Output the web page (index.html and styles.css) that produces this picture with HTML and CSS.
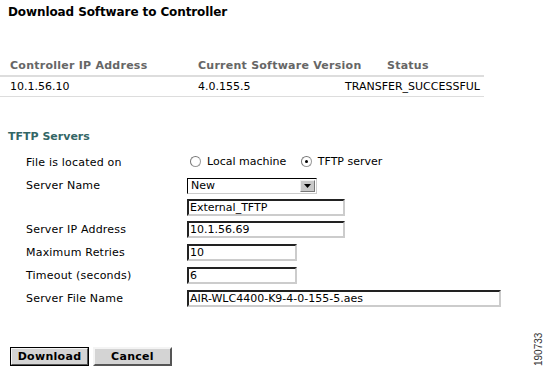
FILE: index.html
```html
<!DOCTYPE html>
<html lang="en">
<head>
  <meta charset="UTF-8">
  <title>Download Software to Controller</title>
  <link rel="stylesheet" href="styles.css">
</head>
<body>

<h2 class="title">Download Software to Controller</h2>

<table class="status">
  <colgroup>
    <col class="c1">
    <col class="c2">
    <col class="c3">
  </colgroup>
  <thead>
    <tr>
      <th>Controller IP Address</th>
      <th>Current Software Version</th>
      <th class="st">Status</th>
    </tr>
  </thead>
  <tbody>
    <tr>
      <td>10.1.56.10</td>
      <td>4.0.155.5</td>
      <td class="st">TRANSFER_SUCCESSFUL</td>
    </tr>
  </tbody>
</table>

<h3 class="section">TFTP Servers</h3>

<table class="form">
  <tr>
    <td class="lbl">File is located on</td>
    <td>
      <label class="radio"><span class="dot"></span>Local machine</label>
      <label class="radio"><span class="dot on"></span>TFTP server</label>
    </td>
  </tr>
  <tr>
    <td class="lbl">Server Name</td>
    <td>
      <div class="select">
        <span>New</span>
        <span class="arrow"><svg width="7" height="4" viewBox="0 0 7 4"><path d="M0 0h7L3.5 4z" fill="#000"/></svg></span>
      </div>
    </td>
  </tr>
  <tr class="tight">
    <td></td>
    <td><div class="field wide">External_TFTP</div></td>
  </tr>
  <tr>
    <td class="lbl">Server IP Address</td>
    <td><div class="field wide">10.1.56.69</div></td>
  </tr>
  <tr>
    <td class="lbl">Maximum Retries</td>
    <td><div class="field short">10</div></td>
  </tr>
  <tr>
    <td class="lbl">Timeout (seconds)</td>
    <td><div class="field short">6</div></td>
  </tr>
  <tr>
    <td class="lbl">Server File Name</td>
    <td><div class="field long">AIR-WLC4400-K9-4-0-155-5.aes</div></td>
  </tr>
</table>

<div class="buttons">
  <button class="btn default">Download</button>
  <button class="btn">Cancel</button>
</div>

<div class="figno">190733</div>

</body>
</html>
```

FILE: styles.css
```css
body {
  margin: 0;
  padding: 0;
  width: 552px;
  height: 372px;
  background: #fff;
  font-family: "DejaVu Sans", Verdana, sans-serif;
  font-size: 11px;
  color: #000;
  position: relative;
  overflow: hidden;
}

.title {
  margin: 0;
  padding: 5px 0 0 8px;
  font-size: 12px;
  font-weight: bold;
  line-height: 15px;
  letter-spacing: -0.1px;
}

.status {
  margin: 37px 0 0 0;
  border-collapse: collapse;
  table-layout: fixed;
  width: 484px;
}

.status col.c1 { width: 188px; }
.status col.c2 { width: 157px; }
.status col.c3 { width: 139px; }

.status th {
  text-align: left;
  color: #666;
  font-size: 11px;
  font-weight: bold;
  letter-spacing: 0.25px;
  white-space: nowrap;
  padding: 2px 0 3px 10px;
  border-bottom: 2px solid #ddd;
  line-height: 13px;
}

.status td {
  padding: 3px 0 3px 10px;
  border-bottom: 1px solid #ddd;
  line-height: 13px;
  white-space: nowrap;
}

.status th.st { padding-left: 42px; }
.status td.st { padding-left: 0; }

.section {
  margin: 33px 0 0 8px;
  font-size: 11px;
  font-weight: bold;
  color: #336666;
  line-height: 13px;
}

.form {
  margin: 8px 0 0 0;
  border-collapse: collapse;
}

.form td {
  padding: 0;
  height: 23px;
  vertical-align: middle;
}

.form tr.tight td {
  height: 21px;
}

.form td.lbl {
  padding-left: 26px;
  width: 161px;
  letter-spacing: 0.2px;
}

.radio {
  display: inline-flex;
  align-items: center;
  margin-right: 8px;
}

.dot {
  width: 11px;
  height: 11px;
  border-radius: 50%;
  border: 1px solid #999;
  border-top-color: #777;
  border-left-color: #777;
  background: #fff;
  margin: 0 6px 0 3px;
  position: relative;
  box-sizing: border-box;
}

.dot.on::after {
  content: "";
  position: absolute;
  left: 3px;
  top: 3px;
  width: 3px;
  height: 3px;
  border-radius: 50%;
  background: #000;
}

.select {
  width: 130px;
  height: 16px;
  box-sizing: border-box;
  border: 1px solid #000;
  border-right-color: #ccc;
  border-bottom-color: #ccc;
  display: flex;
  align-items: center;
  justify-content: space-between;
  padding-left: 3px;
}

.arrow {
  width: 15px;
  height: 12px;
  margin-right: 1px;
  background: #c8c8c8;
  border: 1px solid;
  border-color: #eee #777 #777 #eee;
  box-sizing: border-box;
  display: flex;
  align-items: center;
  justify-content: center;
}

.field {
  height: 17px;
  box-sizing: border-box;
  border: 2px solid;
  border-color: #222 #ccc #ccc #222;
  padding-left: 1px;
  line-height: 13px;
}

.field.wide { width: 158px; }
.field.short { width: 110px; }
.field.long { width: 314px; }

.buttons {
  margin: 37px 0 0 10px;
  display: flex;
  gap: 4px;
}

.btn {
  width: 79px;
  height: 19px;
  padding: 0;
  font-family: "DejaVu Sans", Verdana, sans-serif;
  font-size: 11px;
  font-weight: bold;
  letter-spacing: 0.3px;
  background: #d4d4d4;
  border: 2px solid;
  border-color: #f4f4f4 #555 #555 #f4f4f4;
  color: #000;
}

.btn.default {
  outline: 1px solid #000;
  outline-offset: -1px;
}

.figno {
  position: absolute;
  left: 533px;
  top: 366px;
  font-family: "Liberation Sans", Arial, sans-serif;
  font-size: 10px;
  color: #333;
  transform: rotate(-90deg);
  transform-origin: left top;
}
```
